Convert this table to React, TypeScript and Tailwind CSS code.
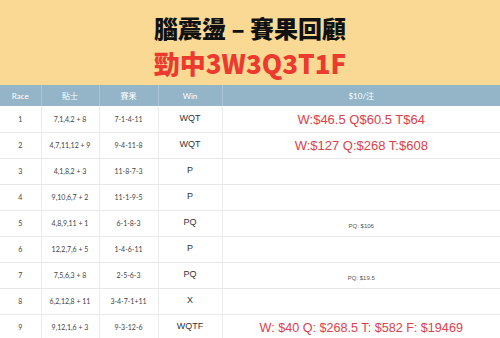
import React from "react"

const rows = [
  { race: "1", tip: "7,1,4,2 + 8", result: "7-1-4-11", win: "WQT", pay: "W:$46.5 Q$60.5 T$64", kind: "big" },
  { race: "2", tip: "4,7,11,12 + 9", result: "9-4-11-8", win: "WQT", pay: "W:$127 Q:$268 T:$608", kind: "big" },
  { race: "3", tip: "4,1,8,2 + 3", result: "11-8-7-3", win: "P", pay: "", kind: "" },
  { race: "4", tip: "9,10,6,7 + 2", result: "11-1-9-5", win: "P", pay: "", kind: "" },
  { race: "5", tip: "4,8,9,11 + 1", result: "6-1-8-3", win: "PQ", pay: "PQ: $106", kind: "small" },
  { race: "6", tip: "12,2,7,6 + 5", result: "1-4-6-11", win: "P", pay: "", kind: "" },
  { race: "7", tip: "7,5,6,3 + 8", result: "2-5-6-3", win: "PQ", pay: "PQ: $19.5", kind: "small" },
  { race: "8", tip: "6,2,12,8 + 11", result: "3-4-7-1+11", win: "X", pay: "", kind: "" },
  { race: "9", tip: "9,12,1,6 + 3", result: "9-3-12-6", win: "WQTF", pay: "W: $40 Q: $268.5 T: $582 F: $19469", kind: "huge" },
]

export default function App() {
  return (
    <div className="w-[500px] h-[338px] overflow-hidden bg-white">
      <div className="h-[85px] bg-[#f9d994] flex flex-col items-center pt-[12px]">
        <h1 className="text-[24px] leading-[32px] font-black text-[#111] font-['Noto_Sans_CJK_TC','Noto_Sans',sans-serif]">
          腦震盪 – 賽果回顧
        </h1>
        <div className="text-[26px] leading-[36px] mt-[1px] font-black text-[#ec3b2e] font-['Noto_Sans_CJK_TC','Noto_Sans',sans-serif]">
          勁中3W3Q3T1F
        </div>
      </div>
      <table className="w-full border-collapse table-fixed font-['Lato','Noto_Sans_CJK_TC',sans-serif]">
        <colgroup>
          <col className="w-[41px]" />
          <col className="w-[58px]" />
          <col className="w-[59px]" />
          <col className="w-[64px]" />
          <col />
        </colgroup>
        <thead>
          <tr className="h-[21px] bg-[#93b5c7] text-white text-[8px]">
            <th className="font-normal border-r border-[#a9c4d2]">Race</th>
            <th className="font-normal border-r border-[#a9c4d2]">貼士</th>
            <th className="font-normal border-r border-[#a9c4d2]">賽果</th>
            <th className="font-normal border-r border-[#a9c4d2]">Win</th>
            <th className="font-normal">$10/注</th>
          </tr>
        </thead>
        <tbody>
          {rows.map((r) => (
            <tr key={r.race} className="h-[26px] border-b border-[#e8e8e8] text-[#444] text-center">
              <td className="text-[7px] border-r border-[#ececec]">{r.race}</td>
              <td className="text-[7px] border-r border-[#ececec]">{r.tip}</td>
              <td className="text-[7px] border-r border-[#ececec]">{r.result}</td>
              <td className="text-[9px] text-[#333] font-['Liberation_Sans',sans-serif] border-r border-[#ececec]">{r.win}</td>
              <td className="font-['Liberation_Sans',sans-serif]">
                {r.kind === "big" && <span className="text-[13px] text-[#dd4049]">{r.pay}</span>}
                {r.kind === "huge" && <span className="text-[12.6px] text-[#dd4049]">{r.pay}</span>}
                {r.kind === "small" && <span className="text-[6px] text-[#555]">{r.pay}</span>}
              </td>
            </tr>
          ))}
        </tbody>
      </table>
    </div>
  )
}
